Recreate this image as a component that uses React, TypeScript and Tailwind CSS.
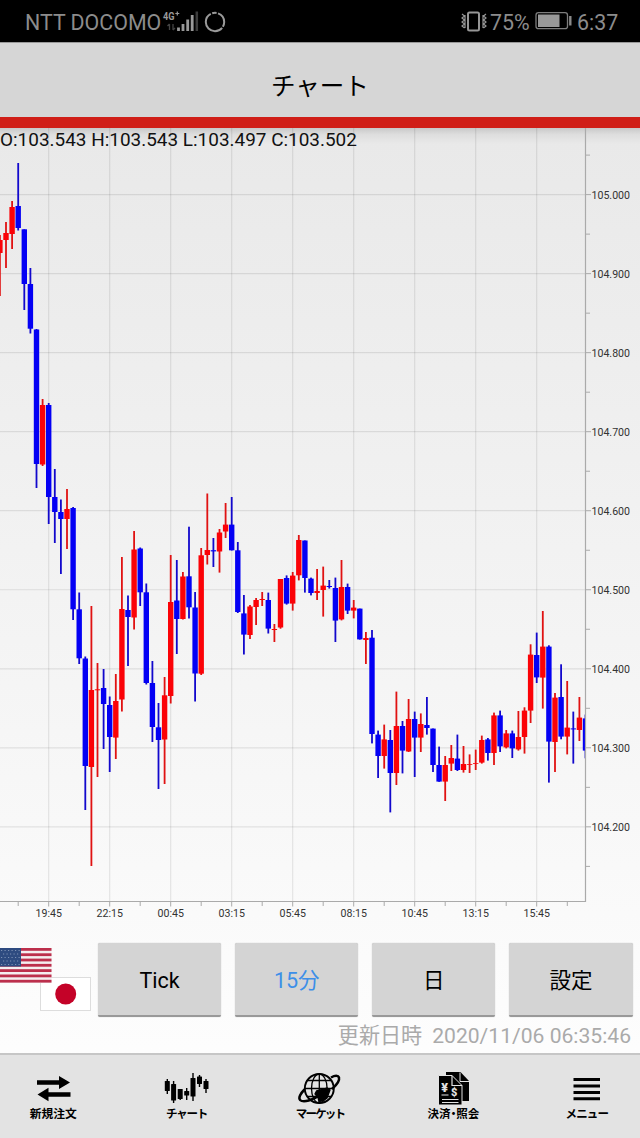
import React from "react";

type Candle = [0 | 1, number, number, number, number];

// [rising, high, bodyTop, bodyBottom, low] in chart pixels
const candles: Candle[] = [
  [1, 235, 240, 253, 296], [1, 222, 233, 240, 268], [1, 201, 207, 234, 249], [0, 163, 206, 228, 230.5],
  [0, 229.3, 229.3, 284, 310], [0, 268, 284, 328.7, 333.5], [0, 329, 329.5, 464, 488], [1, 399, 405, 464.5, 466],
  [0, 403, 405, 497, 524], [0, 469, 497, 512, 543], [0, 499.5, 512, 519, 574], [1, 489, 509, 519, 549],
  [0, 507, 508, 609.3, 620], [0, 592.5, 609.3, 658.3, 664], [0, 656.5, 658.5, 766, 810], [1, 606, 690, 767, 866],
  [1, 663, 689.3, 690.3, 777], [0, 669, 688, 704, 749], [0, 696.5, 705, 737, 772], [1, 674, 701, 737.6, 759],
  [1, 557, 609, 699.5, 711.5], [0, 595.5, 610, 617, 666], [1, 531, 549.5, 617.5, 629.5], [0, 547.5, 548.5, 592.3, 606],
  [0, 583.5, 592.3, 683, 684.5], [0, 661, 683, 727, 742], [0, 703, 727.3, 740, 789], [1, 677, 695.3, 739.5, 784],
  [1, 555, 602, 696, 703.5], [0, 560, 600.5, 619, 654], [1, 572, 576.5, 619, 619.5], [0, 526.7, 576.3, 607.3, 618.5],
  [0, 592, 607.5, 673.5, 701.5], [1, 548, 555.3, 673.7, 675], [1, 493.5, 550, 555, 564.5], [0, 538, 550.2, 551.4, 567],
  [1, 529, 532.5, 551.5, 572.6], [1, 503, 524.6, 531.5, 538], [0, 497, 524.6, 550.3, 550.5], [0, 542, 550.3, 612, 613],
  [0, 595, 613.4, 634.6, 654.5], [1, 605, 606.5, 635, 639], [1, 598, 600, 607, 625], [1, 592, 599, 600, 606],
  [0, 592.6, 600, 628.6, 633.5], [1, 624, 629, 630, 642], [1, 579, 579, 627.5, 628.7], [0, 575.4, 578, 603.6, 604.6],
  [1, 572, 575.6, 603.6, 610.6], [1, 535, 540, 575.3, 580.4], [0, 540.5, 540.5, 578, 592.6], [0, 577.6, 578.6, 593, 595.4],
  [1, 569, 591, 593, 600], [1, 566.6, 585.6, 590, 616.6], [0, 580, 586, 587, 588.6], [0, 577.6, 588, 620.6, 642],
  [1, 560, 587, 619.4, 620.4], [0, 583.6, 587, 610.6, 614], [1, 600, 607.6, 610.6, 618.4], [0, 608.6, 608.6, 639.4, 639.6],
  [1, 632, 638, 640, 664], [0, 630, 637.7, 734, 743.4], [0, 730.6, 734.6, 756, 778], [1, 724.6, 739.4, 756, 768.6],
  [0, 730, 740, 773, 812.4], [1, 691.6, 726, 773, 785], [0, 721, 726, 750.6, 773.4], [1, 699, 719, 751.5, 752],
  [0, 711.6, 719, 737.6, 777], [1, 713.4, 724, 737.6, 752], [0, 697, 725, 728, 734.6], [0, 728.5, 728.6, 765, 772],
  [0, 746.6, 765, 781.6, 781.8], [1, 756, 765, 781.6, 801], [1, 745, 758, 763.6, 771], [0, 734.6, 758.6, 770, 771],
  [1, 746, 764, 770, 772.6], [1, 754.4, 764, 764.8, 773], [1, 749.6, 763, 763.8, 770], [1, 735.6, 740, 762.6, 763.6],
  [0, 738, 739.4, 753, 760.6], [1, 712.6, 715.4, 753, 765], [0, 710.6, 715.4, 746.4, 752], [1, 730, 733.4, 747.4, 748.4],
  [0, 730.6, 733.4, 748.4, 758], [1, 711, 737, 749.4, 750.6], [1, 707.3, 710.6, 737, 753.6], [1, 644.3, 654.6, 710.6, 723],
  [0, 632.6, 655, 677.4, 683], [1, 611, 646.6, 677.6, 708.6], [0, 645.3, 646.6, 741.6, 782.6], [1, 693, 697.6, 742, 772],
  [0, 664.3, 697, 736.6, 739.3], [1, 681, 727.6, 736.6, 754.4], [0, 711.6, 728.4, 729.4, 763.6], [1, 697, 717.6, 730, 741],
  [0, 714.6, 718.4, 750.6, 758.3],
];

const times = ["19:45", "22:15", "00:45", "03:15", "05:45", "08:15", "10:45", "13:15", "15:45"];
const prices = ["105.000", "104.900", "104.800", "104.700", "104.600", "104.500", "104.400", "104.300", "104.200"];

const gridX = (i: number) => 48.7 + i * 61;
const gridY = (i: number) => 194.6 + i * 79.03;

function StatusBar() {
  return (
    <div className="flex h-[42px] items-center bg-black pr-[21px] pl-[25px] text-[21.4px] text-[#8c8c8c]">
      <span className="mt-[4px] w-[137px] whitespace-nowrap">NTT DOCOMO</span>
      <svg className="h-[24px] w-[66px]" viewBox="162 9 66 24" fill="none">
        <text x="163" y="19.8" fontSize="11" fontWeight="700" fill="#9a9a9a" textLength="11.5" lengthAdjust="spacingAndGlyphs">4G</text>
        <path d="M175.3 13.5h4M177.3 11.5v4" stroke="#9a9a9a" strokeWidth="1.2" />
        <path d="M169.5 30v-6m-2 2 2-2M173 24v6m2-2-2 2" stroke="#444" strokeWidth="1.3" />
        <path d="M178.5 27.5v3.5M183 24v7M187.7 19.5v11.5M192.2 15v16" stroke="#9a9a9a" strokeWidth="2.8" />
        <path d="M196.8 11.5v19.5" stroke="#3c3c3c" strokeWidth="2.5" />
        <circle cx="215" cy="22" r="9.2" stroke="#9a9a9a" strokeWidth="2" strokeDasharray="5 1.3 32.4 1.5 4.5 1.5 11.600 0" />
      </svg>
      <div className="flex-1" />
      <svg className="h-[24px] w-[28px]" viewBox="461 9 28 24" fill="none" stroke="#969696">
        <rect x="469" y="12.5" width="11" height="18" rx="1.5" strokeWidth="2" />
        <path d="m463 14 2.500 2-2.500 2 2.500 2-2.500 2 2.500 2-2.500 2 2.500 2M466 15v13M484 15v13M487 14l-2.500 2 2.500 2-2.500 2 2.500 2-2.500 2 2.500 2-2.500 2" strokeWidth="1.2" />
      </svg>
      <span className="mt-[4px] ml-[2px] w-[45px] whitespace-nowrap">75%</span>
      <svg className="h-[20px] w-[38px]" viewBox="535 12 38 20" fill="none">
        <rect x="536" y="13.7" width="31.5" height="16" rx="2.5" stroke="#7d7d7d" strokeWidth="1.3" />
        <path d="M538 15.5h21.5v12.500h-21.500z" fill="#999" />
        <path d="M570.3 17v9.5" stroke="#8a8a8a" strokeWidth="2.4" />
      </svg>
      <span className="mt-[4px] ml-[4px] w-[42px] whitespace-nowrap">6:37</span>
    </div>
  );
}

function Chart() {
  return (
    <div className="relative h-[805px]">
      <svg className="block h-[805px] w-[640px]" viewBox="0 128 640 805">
        <defs>
          <clipPath id="plot">
            <rect x="0" y="128" width="585.5" height="773.5" />
          </clipPath>
          <linearGradient id="shade" x1="0" y1="0" x2="0" y2="1">
            <stop offset="0" stopColor="#000" stopOpacity="0.14" />
            <stop offset="0.4" stopColor="#000" stopOpacity="0.05" />
            <stop offset="1" stopColor="#000" stopOpacity="0" />
          </linearGradient>
        </defs>
        <rect x="0" y="128" width="640" height="16" fill="url(#shade)" />
        {times.map((t, i) => (
          <g key={t}>
            <path d={`M${gridX(i)} 128V901`} stroke="#000" strokeOpacity="0.09" strokeWidth="1.2" />
            <path d={`M${gridX(i)} 901v5.5M${gridX(i) - 30.5} 901v5`} stroke="#aaa" />
            <text x={gridX(i)} y="917.2" fontSize="10.6" textAnchor="middle" fill="#333">{t}</text>
          </g>
        ))}
        <path d="M567.3 901v5" stroke="#aaa" />
        {prices.map((p, i) => (
          <g key={p}>
            <path d={`M0 ${gridY(i)}H585`} stroke="#000" strokeOpacity="0.09" strokeWidth="1.2" />
            <path d={`M585 ${gridY(i)}h6M585 ${gridY(i) - 39.5}h5`} stroke="#aaa" />
            <text x="591.5" y={gridY(i) + 4.3} fontSize="10.6" fill="#333">{p}</text>
          </g>
        ))}
        <path d="M585 866.4h5" stroke="#aaa" />
        <g clipPath="url(#plot)">
          {candles.map(([up, high, top, bottom, low], i) => {
            const x = -0.1 + i * 6.1;
            return (
              <g key={i} fill={up ? "#fb0207" : "#0400f4"}>
                <rect x={x - 0.9} y={high} width="1.8" height={low - high} fill={up ? "#e01212" : "#1208cc"} />
                <rect x={x - 2.7} y={top} width="5.4" height={bottom - top} />
              </g>
            );
          })}
        </g>
        <path d="M0 901.5H585.5V128" fill="none" stroke="#aaa" strokeWidth="1.2" />
      </svg>
      <p className="absolute top-0 left-0 text-[18.95px] leading-[24px] whitespace-nowrap text-[#111]">
        O:103.543 H:103.543 L:103.497 C:103.502
      </p>
    </div>
  );
}

function Flags() {
  return (
    <svg className="h-[66px] w-[98px]" viewBox="0 946 98 66">
      <rect x="40.5" y="977.5" width="50" height="33" fill="#fff" stroke="#ddd" />
      <circle cx="65.7" cy="994" r="10.5" fill="#c40228" />
      <rect x="0" y="948" width="51.5" height="35" fill="#f4eef0" />
      {[0, 1, 2, 3, 4, 5, 6].map((i) => (
        <rect key={i} x="0" y={948 + i * 5.3} width="51.5" height="2.8" fill="#bc2f4c" />
      ))}
      <rect x="0" y="948" width="21" height="18.5" fill="#2e4b80" />
      {[0, 1, 2, 3, 4].map((i) => (
        <path key={i} d={`M${i % 2 ? 3 : 1} ${950.5 + i * 3.5}H20`} stroke="#7d90b3" strokeDasharray="1.2 2.3" />
      ))}
    </svg>
  );
}

const buttons = [
  { label: "Tick", active: false },
  { label: "15分", active: true },
  { label: "日", active: false },
  { label: "設定", active: false },
];

function OrderIcon() {
  return (
    <svg className="h-[40px] w-[60px]" viewBox="23 1068 60 40">
      <path d="M37 1080.300h22v-4.300l11 6.500-11 6.500v-4.300H37zM70.500 1092.300v4.400h-22v4.500l-11-6.700 11-6.700v4.500z" />
    </svg>
  );
}

const miniCandles = [
  [167.3, 1079, 1081, 1091, 1094], [173.6, 1081, 1084, 1100.5, 1103], [180.2, 1089, 1089, 1099, 1100],
  [186.7, 1088, 1091, 1095.5, 1100], [193, 1073, 1078, 1096.5, 1101], [199.5, 1075, 1076.5, 1084, 1087], [206, 1079, 1081, 1089, 1093],
];

function ChartIcon() {
  return (
    <svg className="h-[40px] w-[60px]" viewBox="157 1068 60 40">
      {miniCandles.map(([x, high, top, bottom, low]) => (
        <g key={x}>
          <rect x={x - 0.7} y={high} width="1.4" height={low - high} />
          <rect x={x - 2.5} y={top} width="5" height={bottom - top} rx="0.6" />
        </g>
      ))}
    </svg>
  );
}

function GlobeIcon() {
  return (
    <svg className="h-[40px] w-[60px]" viewBox="290 1068 60 40" fill="none" stroke="#000" strokeWidth="1.3">
      <circle cx="319.3" cy="1088.5" r="14.5" strokeWidth="1.9" />
      <path d="M319.300 1074v29M305 1088.500h28.500M307.500 1080.500h23.500M307.500 1096.500h23.500" />
      <ellipse cx="319.3" cy="1088.5" rx="7.8" ry="14.5" />
      <path d="m316.500 1091 5.500-1.500 5-1.500 3 2-1.500 4-1.500 4-4 3-4 .5-1-4-3-3.500z" fill="#000" />
      <path d="M304.500 1089.500c-4 4-6.500 8.500-4.300 10.600 3.300 2.900 12.500 0 21-5.600M331 1077.500c4-2.200 7.300-2.200 8 0 .8 3-2.500 7.500-7 11.500" strokeWidth="2.5" />
    </svg>
  );
}

function SettleIcon() {
  return (
    <svg className="h-[40px] w-[60px] font-[Roboto]" viewBox="423 1068 60 40">
      <path d="M446 1072h14.500l8.500 9v20h-23z" />
      <path d="M460 1072.500v9h9" fill="none" stroke="#e3e3e3" />
      <path d="M438.500 1075.500H452l10 10v19.500h-23.500z" stroke="#e3e3e3" />
      <path d="M452 1075.500v10h10M442 1099.500h16.500M442 1102.500h16.500M441.500 1095h7" fill="none" stroke="#e3e3e3" strokeWidth="1.2" />
      <text x="441.3" y="1091.8" fontSize="12.5" fontWeight="900" fill="#e3e3e3">¥</text>
      <text x="451" y="1096" fontSize="11" fontWeight="900" fill="#e3e3e3">$</text>
    </svg>
  );
}

function MenuIcon() {
  return (
    <svg className="h-[40px] w-[60px]" viewBox="557 1068 60 40">
      <path d="M573.500 1079.500h26.500M573.500 1086h26.500M573.500 1092.500h26.500M573.500 1098.700h26.500" stroke="#000" strokeWidth="3" />
    </svg>
  );
}

const nav = [
  { label: "新規注文", icon: <OrderIcon />, size: "text-[11.8px]" },
  { label: "チャート", icon: <ChartIcon />, size: "text-[11.5px] tracking-[-1.2px]" },
  { label: "マーケット", icon: <GlobeIcon />, size: "text-[11.5px] tracking-[-1.8px]" },
  { label: "決済・照会", icon: <SettleIcon />, size: "text-[11.5px] [font-feature-settings:'halt']" },
  { label: "メニュー", icon: <MenuIcon />, size: "text-[11.5px] tracking-[-0.9px]" },
];

export default function App() {
  return (
    <div className="flex h-[1138px] w-[640px] flex-col overflow-hidden bg-linear-to-b from-[#e6e6e6] to-white font-[Roboto,'Noto_Sans_CJK_JP',sans-serif]">
      <StatusBar />
      <header className="flex h-[75px] items-center justify-center border-t border-[#999] bg-[#d6d6d6] pt-[14px] text-[24.5px] text-black">
        チャート
      </header>
      <div className="h-[11px] shrink-0 bg-[#d01e17]" />
      <Chart />
      <div className="flex h-[120px] flex-col">
        <div className="flex pt-[10px]">
          <div className="pt-[3px]">
            <Flags />
          </div>
          <div className="flex gap-[13.8px]">
            {buttons.map((b) => (
              <button
                key={b.label}
                className={`h-[74px] w-[123.3px] rounded-[2px] border-b-2 border-[#999] bg-[#d4d4d4] pt-[5px] text-[21.5px] shadow-[0_0_1px_#aaa] ${b.active ? "text-[#3d8fe8]" : "text-black"}`}
              >
                {b.label}
              </button>
            ))}
          </div>
        </div>
        <p className="flex justify-end gap-[10px] pt-[5px] pr-[9px] text-[21.1px] leading-[28px] text-[#aaa]">
          <span>更新日時</span>
          <span>2020/11/06 06:35:46</span>
        </p>
      </div>
      <nav className="flex h-[85px] justify-center border-t-2 border-[#c6c6c6] bg-[#e3e3e3] pt-[13px]">
        {nav.map((n) => (
          <div key={n.label} className="flex w-[133.4px] shrink-0 flex-col items-center">
            {n.icon}
            <span className={`leading-[12px] font-bold whitespace-nowrap text-black ${n.size}`}>{n.label}</span>
          </div>
        ))}
      </nav>
    </div>
  );
}
